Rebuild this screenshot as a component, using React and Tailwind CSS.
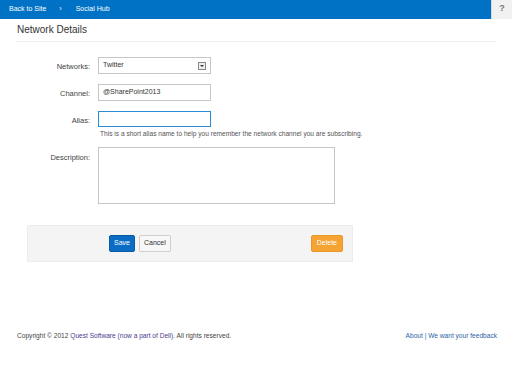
const FONT = { fontFamily: '"Liberation Sans", Arial, sans-serif' };

function Row({ label, children, labelClass = 'pt-[4px]' }) {
  return (
    <div className="flex items-start">
      <div className={`w-[91px] text-right text-[7.5px] text-[#444] pr-[1px] ${labelClass}`}>{label}</div>
      <div className="ml-[7px]">{children}</div>
    </div>
  );
}

export default function App() {
  return (
    <div className="w-[512px] h-[384px] bg-white relative overflow-hidden" style={FONT}>
      <div className="flex h-[19px]">
        <div className="flex-1 bg-[#0072c6] flex items-center text-white text-[7px] pl-[9px]">
          <span>Back to Site</span>
          <span className="ml-[13px] text-[7px]">›</span>
          <span className="ml-[14px]">Social Hub</span>
        </div>
        <div className="w-[21px] bg-[#f1f1f1] border-l border-[#d8d8d8] flex items-start justify-center pt-[2px] text-[#777] text-[9px] font-bold">?</div>
      </div>

      <div className="mx-[16px] pt-[3px] pb-[4px] border-b border-[#eeeeee]">
        <h1 className="pl-[1px] text-[10px] text-[#333] leading-[15px]">Network Details</h1>
      </div>

      <div className="pt-[15px] flex flex-col">
        <Row label="Networks:">
          <div className="w-[113px] h-[17px] border border-[#c6c6c6] flex items-center justify-between px-[4px] text-[7px] text-[#333]">
            <span>Twitter</span>
            <span className="w-[8px] h-[8px] border border-[#888] bg-[#eee] flex items-center justify-center">
              <span className="w-0 h-0 border-l-[2px] border-r-[2px] border-t-[2px] border-l-transparent border-r-transparent border-t-[#333]" />
            </span>
          </div>
        </Row>
        <div className="h-[10px]" />
        <Row label="Channel:">
          <div className="w-[113px] h-[17px] border border-[#c6c6c6] flex items-center px-[4px] text-[7px] text-[#333]">@SharePoint2013</div>
        </Row>
        <div className="h-[10px]" />
        <Row label="Alias:">
          <div className="w-[113px] h-[16px] border border-[#2a8dd4] bg-white" />
          <div className="mt-[2px] pl-[2px] text-[6.6px] text-[#555]">This is a short alias name to help you remember the network channel you are subscribing.</div>
        </Row>
        <div className="h-[8px]" />
        <Row label="Description:" labelClass="pt-[5px]">
          <div className="w-[237px] h-[57px] border border-[#c6c6c6] bg-white" />
        </Row>
      </div>

      <div className="ml-[27px] mt-[21px] w-[326px] h-[37px] bg-[#f4f4f4] border border-[#ececec] flex items-center pl-[81px] pr-[9px]">
        <button className="h-[17px] px-[4px] bg-[#0b6cc4] border border-[#0a5aa3] rounded-[2px] text-white text-[7px]">Save</button>
        <button className="ml-[4px] h-[17px] px-[4px] bg-[#f7f7f7] border border-[#cfcfcf] rounded-[2px] text-[#333] text-[7px]">Cancel</button>
        <div className="flex-1" />
        <button className="h-[17px] px-[5px] bg-[#f5a332] border border-[#e9982a] rounded-[2px] text-white text-[7px]">Delete</button>
      </div>

      <div className="absolute left-0 right-0 top-[331px] flex justify-between pl-[16px] pr-[15px] text-[6.6px]">
        <span className="pl-[1px] text-[#444]">
          Copyright © 2012 <span className="text-[#4b3d8f]">Quest Software (now a part of Dell)</span>. All rights reserved.
        </span>
        <span className="text-[#2e5fa8]">About | We want your feedback</span>
      </div>
    </div>
  );
}
